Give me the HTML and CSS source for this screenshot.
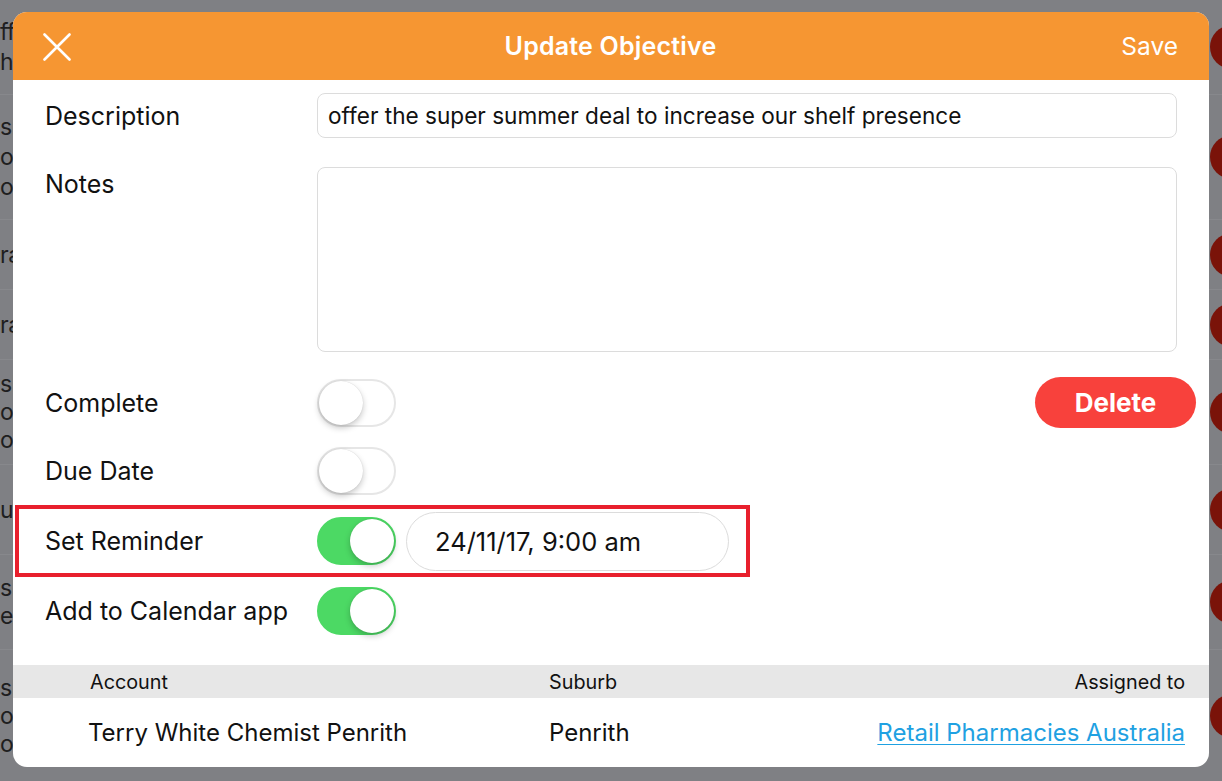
FILE: index.html
```html
<!DOCTYPE html>
<html lang="en">
<head>
<meta charset="utf-8">
<title>Update Objective</title>
<link rel="stylesheet" href="styles.css">
</head>
<body>
<div class="backdrop">
  <div class="bg-row r1"><div class="bg-text"><span>ffe</span><span>he</span></div><span class="bg-dot"></span></div>
  <div class="bg-row r2"><div class="bg-text"><span>sl</span><span>os</span><span>o</span></div><span class="bg-dot"></span></div>
  <div class="bg-row r3"><div class="bg-text"><span>ra</span></div><span class="bg-dot"></span></div>
  <div class="bg-row r4"><div class="bg-text"><span>ra</span></div><span class="bg-dot"></span></div>
  <div class="bg-row r5"><div class="bg-text tight"><span>sl</span><span>os</span><span>o</span></div><span class="bg-dot"></span></div>
  <div class="bg-row r6"><div class="bg-text"><span>ut</span></div><span class="bg-dot"></span></div>
  <div class="bg-row r7"><div class="bg-text tight"><span>sl</span><span>ex</span></div><span class="bg-dot"></span></div>
  <div class="bg-row r8"><div class="bg-text tight"><span>sl</span><span>os</span><span>o</span></div><span class="bg-dot"></span></div>
</div>

<div class="modal">
  <header class="modal-header">
    <button class="close-btn" aria-label="Close">
      <svg width="28" height="28" viewBox="0 0 28 28"><path d="M1.5 1.5 L26.5 26.5 M26.5 1.5 L1.5 26.5" stroke="#fff" stroke-width="2.6" stroke-linecap="round" fill="none"/></svg>
    </button>
    <h1 class="modal-title">Update Objective</h1>
    <button class="save-btn">Save</button>
  </header>

  <div class="form">
    <div class="field field-desc">
      <label class="label">Description</label>
      <div class="input">offer the super summer deal to increase our shelf presence</div>
    </div>
    <div class="field field-notes">
      <label class="label">Notes</label>
      <div class="textarea"></div>
    </div>
    <div class="field switch-row row-complete">
      <label class="label">Complete</label>
      <span class="switch"><span class="knob"></span></span>
      <button class="delete-btn">Delete</button>
    </div>
    <div class="field switch-row row-due">
      <label class="label">Due Date</label>
      <span class="switch"><span class="knob"></span></span>
    </div>
    <div class="field switch-row row-reminder">
      <label class="label">Set Reminder</label>
      <span class="switch on"><span class="knob"></span></span>
      <div class="date-pill">24/11/17, 9:00 am</div>
    </div>
    <div class="field switch-row row-calendar">
      <label class="label">Add to Calendar app</label>
      <span class="switch on"><span class="knob"></span></span>
    </div>
  </div>

  <div class="table">
    <div class="table-head">
      <span>Account</span>
      <span>Suburb</span>
      <span class="right">Assigned to</span>
    </div>
    <div class="table-row">
      <span>Terry White Chemist Penrith</span>
      <span class="suburb">Penrith</span>
      <a class="right link" href="#">Retail Pharmacies Australia</a>
    </div>
  </div>
</div>
</body>
</html>
```
FILE: styles.css
```css
* { box-sizing: border-box; }

html, body {
  margin: 0;
  padding: 0;
}

body {
  width: 1222px;
  height: 781px;
  overflow: hidden;
  background: #7f8084;
  font-family: "Inter", "Noto Sans", "Liberation Sans", sans-serif;
  color: #111;
  position: relative;
}

/* ---------- dimmed page behind the modal ---------- */
.backdrop {
  display: flex;
  flex-direction: column;
  width: 1222px;
}

.bg-row {
  display: flex;
  align-items: center;
  justify-content: space-between;
  border-bottom: 1px solid #87888c;
}
.r1 { height: 95px; }
.r2 { height: 125px; }
.r3 { height: 70px; }
.r4 { height: 70px; }
.r5 { height: 105px; }
.r6 { height: 90px; }
.r7 { height: 95px; }
.r8 { height: 131px; border-bottom: none; }

.bg-text {
  display: flex;
  flex-direction: column;
  font-size: 23px;
  line-height: 30px;
  color: #1e1e20;
  margin-left: 0;
  letter-spacing: -0.5px;
  white-space: nowrap;
}
.bg-text.tight { line-height: 28px; }

.bg-dot {
  width: 44px;
  height: 44px;
  border-radius: 50%;
  background: #7a1309;
  margin-right: -32px;
  flex: none;
}

/* ---------- modal ---------- */
.modal {
  position: absolute;
  left: 13px;
  top: 12px;
  width: 1196px;
  height: 755px;
  background: #fff;
  border-radius: 14px;
  overflow: hidden;
  display: flex;
  flex-direction: column;
}

.modal-header {
  height: 68px;
  flex: none;
  background: #f69632;
  display: grid;
  grid-template-columns: 1fr auto 1fr;
  align-items: center;
  padding: 0 31px 0 30px;
  color: #fff;
}

.close-btn {
  justify-self: start;
  background: none;
  border: 0;
  padding: 0;
  width: 28px;
  height: 28px;
  display: flex;
  margin-top: 1px;
}

.modal-title {
  margin: 0;
  font-size: 25px;
  font-weight: 600;
  letter-spacing: 0.2px;
}

.save-btn {
  justify-self: end;
  background: none;
  border: 0;
  padding: 0;
  color: #fff;
  font-family: inherit;
  font-size: 24.5px;
  font-weight: 400;
}

/* ---------- form ---------- */
.form {
  display: flex;
  flex-direction: column;
  padding-top: 13px;
}

.field {
  display: flex;
  padding-left: 32px;
}

.label {
  width: 272px;
  flex: none;
  font-size: 25px;
  color: #111;
}

.field-desc { align-items: center; }

.input {
  width: 860px;
  height: 45px;
  border: 1px solid #dcdcdc;
  border-radius: 8px;
  padding: 0 10px;
  display: flex;
  align-items: center;
  font-size: 22.6px;
  color: #111;
  white-space: nowrap;
}

.field-notes {
  margin-top: 29px;
  align-items: flex-start;
}
.field-notes .label { padding-top: 2px; }

.textarea {
  width: 860px;
  height: 185px;
  border: 1px solid #dcdcdc;
  border-radius: 8px;
}

.switch-row {
  align-items: center;
}

.row-complete {
  margin-top: 16px;
  height: 69px;
  padding-right: 13px;
}
.row-due { height: 68px; }
.row-reminder {
  height: 72px;
  margin-left: 2px;
  width: 735px;
  border: 4px solid #e8202d;
  padding-left: 26px;
}
.row-calendar { height: 68px; }

.switch {
  width: 79px;
  height: 48px;
  border-radius: 24px;
  border: 2px solid #e6e6e6;
  background: #fff;
  position: relative;
  flex: none;
}
.switch .knob {
  position: absolute;
  top: 0;
  left: 0;
  width: 44px;
  height: 44px;
  border-radius: 50%;
  background: #fff;
  box-shadow: 0 3px 6px rgba(0,0,0,0.22), 0 0 1px rgba(0,0,0,0.18);
}
.switch.on {
  background: #4cd964;
  border-color: #4cd964;
}
.switch.on .knob {
  left: auto;
  right: 0;
}

.delete-btn {
  margin-left: auto;
  width: 161px;
  height: 51px;
  border: 0;
  border-radius: 26px;
  background: #f8413c;
  color: #fff;
  font-family: inherit;
  font-size: 26px;
  font-weight: 700;
}

.date-pill {
  margin-left: 10px;
  width: 323px;
  height: 59px;
  border: 1px solid #dcdcdc;
  border-radius: 30px;
  display: flex;
  align-items: center;
  padding-left: 28px;
  font-size: 25.5px;
  color: #111;
}

/* ---------- table ---------- */
.table {
  margin-top: 20px;
  display: flex;
  flex-direction: column;
}

.table-head,
.table-row {
  display: grid;
  grid-template-columns: 459px 1fr auto;
  align-items: center;
  padding: 0 24px 0 77px;
}

.table-head {
  height: 33px;
  background: #e7e7e7;
  font-size: 19.8px;
  color: #111;
}

.table-row {
  height: 69px;
  font-size: 24px;
  color: #111;
  padding-left: 75px;
  grid-template-columns: 461px 1fr auto;
}

.right { justify-self: end; }

.link {
  color: #1fa1e2;
  text-decoration: underline;
  text-underline-offset: 3px;
  text-decoration-thickness: 1px;
}
```
